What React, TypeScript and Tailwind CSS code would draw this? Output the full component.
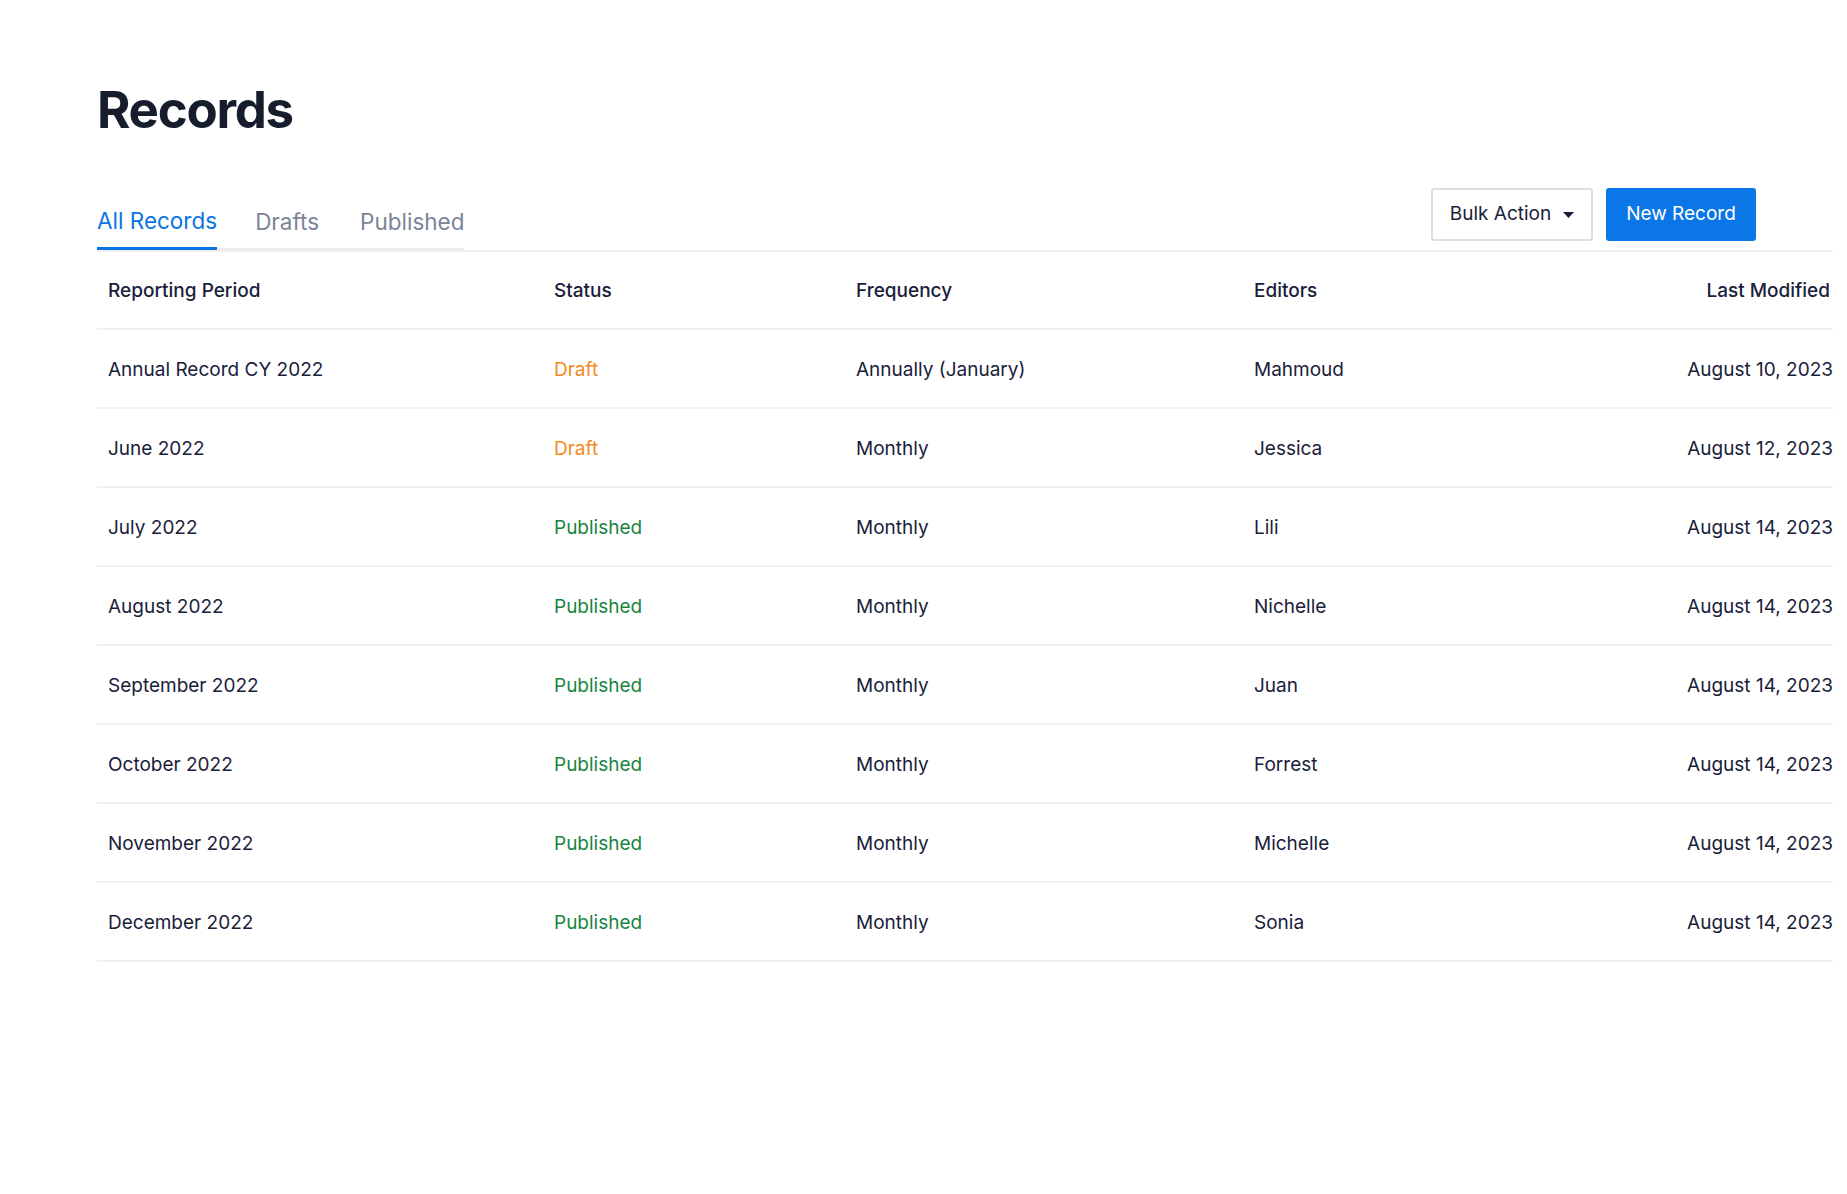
import React from "react";

type Row = { period: string; status: "Draft" | "Published"; freq: string; editor: string; modified: string };

const rows: Row[] = [
  { period: "Annual Record CY 2022", status: "Draft", freq: "Annually (January)", editor: "Mahmoud", modified: "August 10, 2023" },
  { period: "June 2022", status: "Draft", freq: "Monthly", editor: "Jessica", modified: "August 12, 2023" },
  { period: "July 2022", status: "Published", freq: "Monthly", editor: "Lili", modified: "August 14, 2023" },
  { period: "August 2022", status: "Published", freq: "Monthly", editor: "Nichelle", modified: "August 14, 2023" },
  { period: "September 2022", status: "Published", freq: "Monthly", editor: "Juan", modified: "August 14, 2023" },
  { period: "October 2022", status: "Published", freq: "Monthly", editor: "Forrest", modified: "August 14, 2023" },
  { period: "November 2022", status: "Published", freq: "Monthly", editor: "Michelle", modified: "August 14, 2023" },
  { period: "December 2022", status: "Published", freq: "Monthly", editor: "Sonia", modified: "August 14, 2023" },
];

export default function App() {
  return (
    <div className="min-h-screen bg-white font-['Inter',sans-serif] text-[#19213a]">
      <div className="pl-[97px] pr-[14px] pt-[80px]">
        <h1 className="text-[51px] font-bold leading-[60px] tracking-[-0.025em] text-[#161d2c]">Records</h1>

        <div className="mt-[48px] flex items-end justify-between">
          <div className="flex border-b-2 border-[#ececee]">
            <button className="-mb-[2px] mr-[38px] border-b-[3px] border-[#0b74e5] pb-[11px] text-[22.5px] leading-[30px] text-[#0b74e5]">
              All Records
            </button>
            <button className="mr-[41px] pb-[11px] text-[22.5px] leading-[30px] text-[#7b8499]">Drafts</button>
            <button className="pb-[11px] text-[22.5px] leading-[30px] text-[#7b8499]">Published</button>
          </div>
          <div className="mb-[9px] mr-[77px] flex gap-[13px]">
            <button className="flex h-[53px] w-[162px] items-center justify-center gap-[12px] rounded-[3px] border-2 border-[#dcdde1] bg-white text-[19px] text-[#19213a]">
              Bulk Action
              <svg width="11" height="6" viewBox="0 0 11 6">
                <path d="M0 0 L11 0 L5.5 6 Z" fill="#19213a" />
              </svg>
            </button>
            <button className="flex h-[53px] w-[150px] items-center justify-center rounded-[3px] bg-[#0b76e6] text-[19px] text-white">
              New Record
            </button>
          </div>
        </div>

        <div className="border-t-2 border-[#f0f0f2]">
          <div className="grid h-[78px] grid-cols-[457px_302px_398px_1fr_auto] items-center border-b-2 border-[#f0f0f2] pt-[2px] text-[19px] font-medium">
            <div className="pl-[11px]">Reporting Period</div>
            <div>Status</div>
            <div>Frequency</div>
            <div>Editors</div>
            <div className="pr-[3px] text-right">Last Modified</div>
          </div>
          {rows.map((r) => (
            <div
              key={r.period}
              className="grid h-[79px] grid-cols-[457px_302px_398px_1fr_auto] items-center border-b-2 border-[#f0f0f2] pt-[3px] text-[19px]"
            >
              <div className="pl-[11px]">{r.period}</div>
              <div className={r.status === "Draft" ? "text-[#f7881d]" : "text-[#17853f]"}>{r.status}</div>
              <div>{r.freq}</div>
              <div>{r.editor}</div>
              <div className="text-right">{r.modified}</div>
            </div>
          ))}
        </div>
      </div>
    </div>
  );
}
